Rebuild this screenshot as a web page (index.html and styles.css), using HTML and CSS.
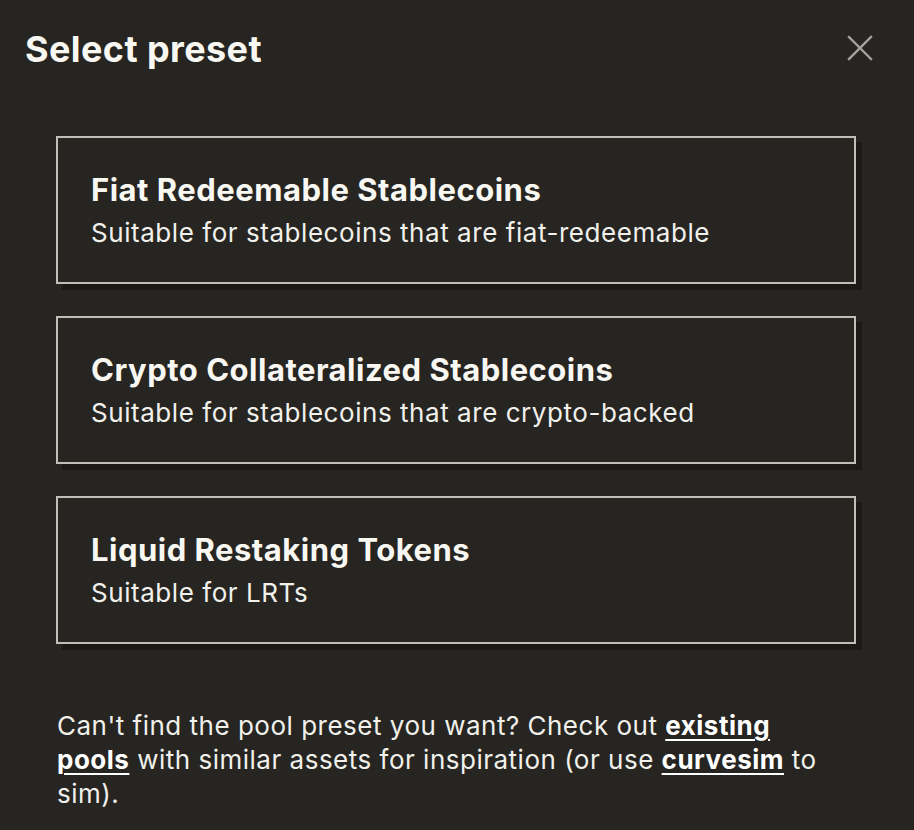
FILE: index.html
```html
<!DOCTYPE html>
<html lang="en">
<head>
<meta charset="utf-8">
<title>Select preset</title>
<link rel="stylesheet" href="styles.css">
</head>
<body>
<div class="modal">
  <header class="modal-header">
    <h1 class="modal-title">Select preset</h1>
    <button class="close-btn" aria-label="Close">
      <svg width="28" height="28" viewBox="0 0 28 28" fill="none" stroke="currentColor" stroke-width="2.4" stroke-linecap="square">
        <path d="M3 3 L25 25 M25 3 L3 25"/>
      </svg>
    </button>
  </header>
  <div class="preset-list">
    <button class="preset">
      <span class="preset-name">Fiat Redeemable Stablecoins</span>
      <span class="preset-desc">Suitable for stablecoins that are fiat-redeemable</span>
    </button>
    <button class="preset">
      <span class="preset-name">Crypto Collateralized Stablecoins</span>
      <span class="preset-desc">Suitable for stablecoins that are crypto-backed</span>
    </button>
    <button class="preset">
      <span class="preset-name">Liquid Restaking Tokens</span>
      <span class="preset-desc">Suitable for LRTs</span>
    </button>
  </div>
  <p class="footer-note">Can't find the pool preset you want? Check out <a href="#">existing pools</a> with similar assets for inspiration (or use <a href="#">curvesim</a> to sim).</p>
</div>
</body>
</html>
```

FILE: styles.css
```css
html, body {
  margin: 0;
  padding: 0;
  background: #262521;
}
body {
  font-family: Inter, "Noto Sans", sans-serif;
  color: #f4f3ee;
}
.modal {
  width: 914px;
  height: 830px;
  box-sizing: border-box;
}
.modal-header {
  display: flex;
  align-items: center;
  justify-content: space-between;
  padding: 27px 40px 0 25px;
  height: 44px;
}
.modal-title {
  margin: 0;
  font-size: 36px;
  font-weight: 700;
  letter-spacing: 0.4px;
  line-height: 44px;
  color: #f8f7f2;
}
.close-btn {
  background: none;
  border: 0;
  padding: 0;
  margin-top: -3px;
  color: #a5a39d;
  width: 28px;
  height: 28px;
  display: flex;
  cursor: pointer;
}
.preset-list {
  display: flex;
  flex-direction: column;
  gap: 32px;
  padding: 65px 58px 0 56px;
}
.preset {
  display: flex;
  flex-direction: column;
  align-items: flex-start;
  justify-content: center;
  gap: 9px;
  height: 148px;
  box-sizing: border-box;
  padding: 0 33px;
  background: #262521;
  border: 2px solid #c1bfb8;
  box-shadow: 6px 6px 0 #1b1a17;
  font-family: inherit;
  color: inherit;
  text-align: left;
  cursor: pointer;
}
.preset-name {
  font-size: 31px;
  font-weight: 700;
  line-height: 36px;
  letter-spacing: 0.5px;
  color: #f8f7f2;
}
.preset-desc {
  font-size: 26px;
  font-weight: 400;
  line-height: 32px;
  letter-spacing: 0.55px;
  color: #f1f0eb;
}
.footer-note {
  margin: 65px 0 0 57px;
  width: 790px;
  font-size: 26px;
  line-height: 34px;
  letter-spacing: 0.5px;
  font-weight: 400;
  color: #f1f0eb;
}
.footer-note a {
  color: #ffffff;
  font-weight: 700;
  text-decoration: underline;
  text-underline-offset: 4px;
  text-decoration-thickness: 2px;
}
```
